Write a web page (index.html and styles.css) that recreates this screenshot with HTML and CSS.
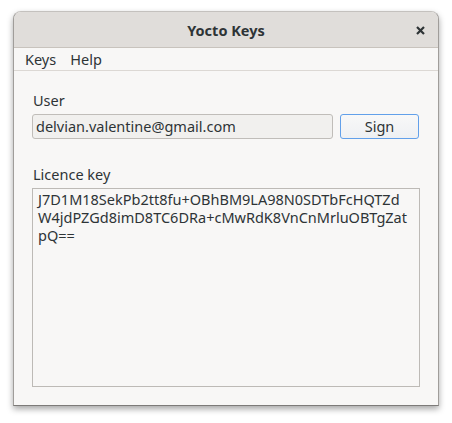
FILE: index.html
```html
<!DOCTYPE html>
<html>
<head>
<meta charset="utf-8">
<link rel="stylesheet" href="styles.css">
</head>
<body>
<div class="window">
  <div class="titlebar">
    <span class="title">Yocto Keys</span>
    <span class="close">
      <svg width="9" height="9" viewBox="0 0 9 9"><path d="M1 1 L8 8 M8 1 L1 8" stroke="#2e3436" stroke-width="2.2" stroke-linecap="butt"/></svg>
    </span>
  </div>
  <div class="menubar">
    <span class="menu-item">Keys</span>
    <span class="menu-item">Help</span>
  </div>
  <div class="content">
    <div class="label">User</div>
    <div class="row">
      <div class="entry">delvian.valentine@gmail.com</div>
      <div class="button">Sign</div>
    </div>
    <div class="label label-key">Licence key</div>
    <div class="textarea">J7D1M18SekPb2tt8fu+OBhBM9LA98N0SDTbFcHQTZd<br>W4jdPZGd8imD8TC6DRa+cMwRdK8VnCnMrluOBTgZat<br>pQ==</div>
  </div>
</div>
</body>
</html>
```
FILE: styles.css
```css
html, body {
  margin: 0;
  padding: 0;
  background: #ffffff;
}
body {
  font-family: "Noto Sans", "DejaVu Sans", sans-serif;
  font-size: 14.5px;
  color: #2e3436;
  padding: 11px 0 0 13px;
  height: 423px;
  box-sizing: border-box;
}
.window {
  width: 426px;
  height: 395px;
  box-sizing: border-box;
  background: #f8f7f6;
  border: 1px solid #a09d9a;
  border-top-color: #c4c1be;
  border-bottom-color: #7d7b79;
  border-radius: 8px 8px 0 0;
  box-shadow: 0 3px 6px rgba(0,0,0,0.35);
  display: flex;
  flex-direction: column;
  overflow: hidden;
}
.titlebar {
  height: 36px;
  flex: none;
  box-sizing: border-box;
  background: #e0ddda;
  border-bottom: 1px solid #c8c3bd;
  display: flex;
  align-items: center;
  justify-content: center;
  position: relative;
}
.title {
  font-weight: bold;
  font-size: 14.5px;
  color: #2e3436;
}
.close {
  position: absolute;
  left: 402px;
  top: 14px;
  width: 9px;
  height: 9px;
  display: flex;
}
.menubar {
  height: 23px;
  flex: none;
  box-sizing: border-box;
  border-bottom: 1px solid #dcd8d4;
  display: flex;
  align-items: center;
  padding-left: 11px;
  gap: 14px;
}
.menu-item {
  color: #2e3436;
}
.content {
  padding: 19px 18px 0 18px;
  display: flex;
  flex-direction: column;
}
.label {
  padding-left: 1px;
  line-height: 20px;
  margin-bottom: 4px;
}
.label-key {
  margin-top: 25px;
}
.row {
  display: flex;
  gap: 7px;
}
.entry {
  width: 301px;
  height: 25px;
  box-sizing: border-box;
  border: 1px solid #c0bdb9;
  border-radius: 3px;
  background: #f1f0ee;
  padding-left: 3px;
  line-height: 22px;
}
.button {
  width: 79px;
  height: 25px;
  box-sizing: border-box;
  border: 1px solid #62a0ea;
  border-radius: 3px;
  background: linear-gradient(#f8f8f8, #eef0f3);
  text-align: center;
  line-height: 22px;
}
.textarea {
  height: 199px;
  box-sizing: border-box;
  border: 1px solid #bdbab6;
  padding: 1px 5px;
  line-height: 18px;
  white-space: nowrap;
}
```
